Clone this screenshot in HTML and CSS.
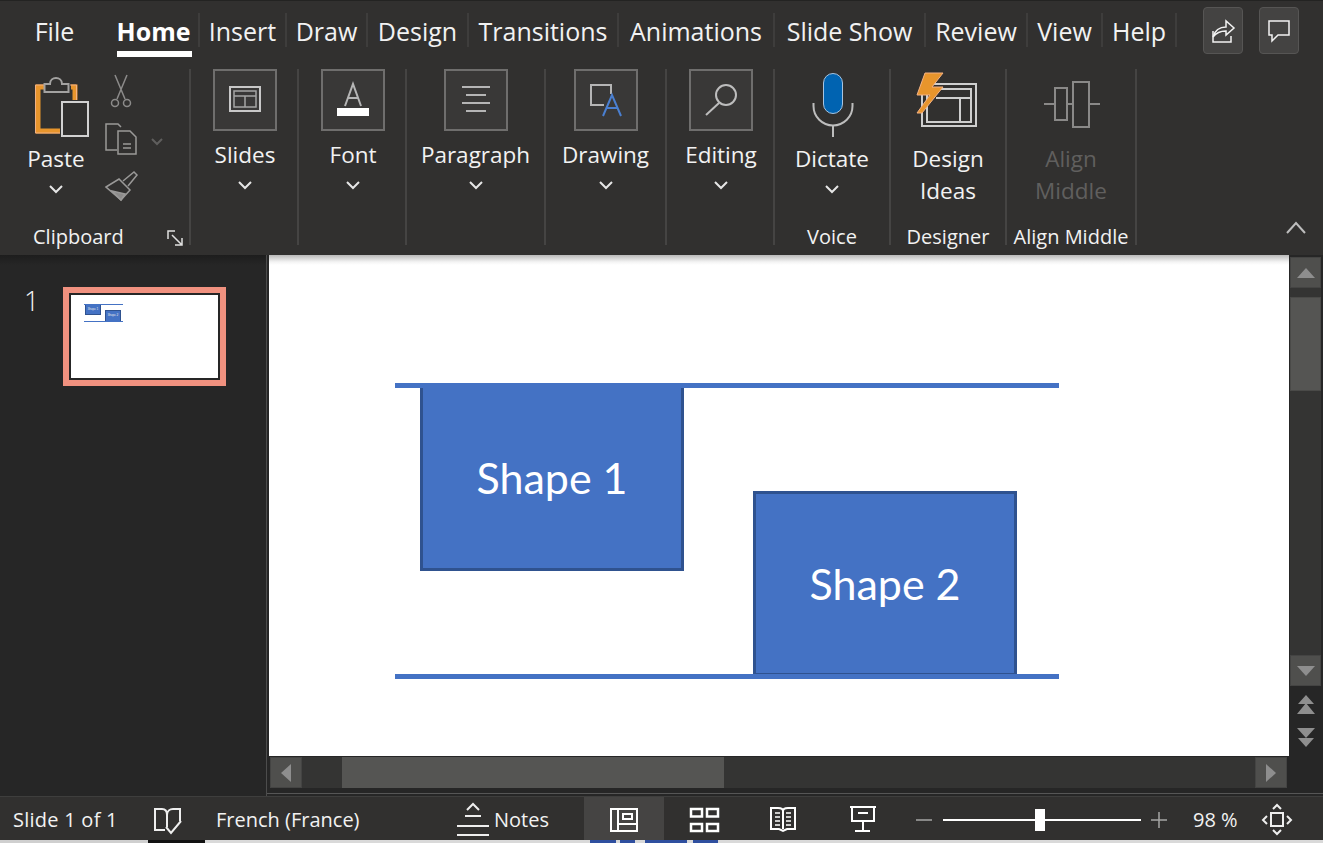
FILE: index.html
```html
<!DOCTYPE html>
<html lang="en">
<head>
    <meta charset="UTF-8">
    <meta name="viewport" content="width=device-width, initial-scale=1.0">
    <title>PowerPoint - Home</title>
    <link rel="stylesheet" href="styles.css">
</head>
<body>
<div class="app">
    <header class="ribbon">
        <div class="tabs-row">
            <nav class="tabs">
                <div class="tab tab-plain">File</div>
                <div class="tab tab-active">Home</div>
                <div class="tab">Insert</div>
                <div class="tab">Draw</div>
                <div class="tab">Design</div>
                <div class="tab">Transitions</div>
                <div class="tab">Animations</div>
                <div class="tab">Slide Show</div>
                <div class="tab">Review</div>
                <div class="tab">View</div>
                <div class="tab">Help</div>
            </nav>
            <div class="top-actions">
                <button class="top-btn">
                    <svg width="38" height="45" viewBox="1204 8 38 45" fill="none" stroke="#f2f2f2" stroke-width="1.500">
                        <path d="M1213 31V42H1231V36"/>
                        <path d="M1213 37C1215 30 1220 27 1226 27V21L1234 28L1226 35V31C1220 31 1216 33 1213 37Z"/>
                    </svg>
                </button>
                <button class="top-btn">
                    <svg width="38" height="45" viewBox="1260 8 38 45" fill="none" stroke="#f2f2f2" stroke-width="1.500">
                        <path d="M1269 21H1289V35H1278L1272 41V35H1269Z"/>
                    </svg>
                </button>
            </div>
        </div>
        <div class="groups-row">
            <div class="groups">
                <section class="group">
                    <div class="group-body clip-body">
                        <div class="big-btn paste-btn">
                            <svg width="92" height="74" viewBox="10 69 92 74" fill="none">
                                <path d="M44 87H38V131H60" stroke="#e8952c" stroke-width="5"/>
                                <path d="M71 87H75V100" stroke="#e8952c" stroke-width="5"/>
                                <path d="M44 85H35.500V133H60M70 85H76.500V100" stroke="#f4b183" stroke-width="1"/>
                                <path d="M44.500 92V84H50C50 76 62 76 62 84H68.500V92Z" stroke="#a3a2a1" stroke-width="2" fill="#31302f"/>
                                <rect x="62" y="102" width="26" height="34" stroke="#d2d2d2" stroke-width="2" fill="#31302f"/>
                            </svg>
                            <div class="btn-label">Paste</div>
                            <svg class="chevron" width="14" height="10" viewBox="0 0 14 10"><polyline points="1 2 7 8 13 2"/></svg>
                        </div>
                        <div class="clip-tools">
                            <svg width="64" height="42" viewBox="102 70 64 42" fill="none" stroke="#8c8b8a" stroke-width="1.500">
                                <path d="M115 75L125 99M127 75L117 99"/>
                                <circle cx="115" cy="103" r="3.500"/>
                                <circle cx="127" cy="103" r="3.500"/>
                            </svg>
                            <svg width="64" height="46" viewBox="102 112 64 46" fill="none" stroke="#9a9998" stroke-width="1.500">
                                <path d="M117 150H106V124H118L121 127"/>
                                <path d="M118 154V131H130L136 137V154Z"/>
                                <path d="M123 144H131M123 148H131"/>
                                <polyline points="152 139 157 144 162 139" stroke="#5f5e5d" stroke-width="2"/>
                            </svg>
                            <svg width="64" height="48" viewBox="102 158 64 48" fill="none" stroke="#9a9998" stroke-width="1.500">
                                <path d="M106 187L119 179L130 190L121 200Z"/>
                                <path d="M112 191L125 194L121 200Z" fill="#8c8b8a"/>
                                <path d="M123 181L134 172L137 175L128 186"/>
                            </svg>
                        </div>
                    </div>
                    <div class="group-label clip-label">
                        <span>Clipboard</span>
                        <svg width="18" height="18" viewBox="166 228 18 18" fill="none" stroke="#e0e0e0" stroke-width="1.500">
                            <path d="M175 230H168V238M172 234L182 244M182 237V244H175"/>
                        </svg>
                    </div>
                </section>

                <section class="group">
                    <div class="group-body nudge">
                        <div class="collapsed-box">
                            <svg width="60" height="58" viewBox="215 71 60 58" fill="none" stroke="#c8c8c8" stroke-width="2">
                                <rect x="230" y="87" width="30" height="24"/>
                                <path d="M234 91H256V107H234ZM234 96H256M245 96V107" stroke="#a5a5a5" stroke-width="1.500"/>
                            </svg>
                        </div>
                        <div class="btn-label box-label">Slides</div>
                        <svg class="chevron box-chevron" width="14" height="10" viewBox="0 0 14 10"><polyline points="1 2 7 8 13 2"/></svg>
                    </div>
                </section>

                <section class="group">
                    <div class="group-body nudge">
                        <div class="collapsed-box">
                            <svg width="60" height="58" viewBox="323 71 60 58" fill="none" stroke="#b5b5b5" stroke-width="2">
                                <path d="M345 106L353 84L361 106M348 98H358"/>
                                <rect x="337" y="108" width="32" height="8" fill="#fff" stroke="none"/>
                            </svg>
                        </div>
                        <div class="btn-label box-label">Font</div>
                        <svg class="chevron box-chevron" width="14" height="10" viewBox="0 0 14 10"><polyline points="1 2 7 8 13 2"/></svg>
                    </div>
                </section>

                <section class="group">
                    <div class="group-body">
                        <div class="collapsed-box">
                            <svg width="60" height="58" viewBox="446 71 60 58" fill="none" stroke="#b5b5b5" stroke-width="2">
                                <path d="M462 87H490M466 95H486M462 103H490M466 111H486"/>
                            </svg>
                        </div>
                        <div class="btn-label box-label">Paragraph</div>
                        <svg class="chevron box-chevron" width="14" height="10" viewBox="0 0 14 10"><polyline points="1 2 7 8 13 2"/></svg>
                    </div>
                </section>

                <section class="group">
                    <div class="group-body">
                        <div class="collapsed-box">
                            <svg width="60" height="58" viewBox="576 71 60 58" fill="none" stroke-width="2">
                                <path d="M611 94V85H591V105H604" stroke="#b5b5b5"/>
                                <path d="M603 116L612 95L621 116M606 108H618" stroke="#4a7fd0"/>
                            </svg>
                        </div>
                        <div class="btn-label box-label">Drawing</div>
                        <svg class="chevron box-chevron" width="14" height="10" viewBox="0 0 14 10"><polyline points="1 2 7 8 13 2"/></svg>
                    </div>
                </section>

                <section class="group">
                    <div class="group-body nudge">
                        <div class="collapsed-box">
                            <svg width="60" height="58" viewBox="691 71 60 58" fill="none" stroke="#bdbdbd" stroke-width="2">
                                <circle cx="726" cy="95" r="10"/>
                                <path d="M719 103L706 115"/>
                            </svg>
                        </div>
                        <div class="btn-label box-label">Editing</div>
                        <svg class="chevron box-chevron" width="14" height="10" viewBox="0 0 14 10"><polyline points="1 2 7 8 13 2"/></svg>
                    </div>
                </section>

                <section class="group">
                    <div class="group-body">
                        <div class="big-btn">
                            <svg width="114" height="74" viewBox="775 69 114 74" fill="none">
                                <rect x="823.500" y="73.500" width="19" height="40" rx="9.500" fill="#0063b1" stroke="#a8c4e0"/>
                                <path d="M813.500 103V106A19.500 19.500 0 0 0 852.500 106V103M833 125V137" stroke="#bdbdbd" stroke-width="2"/>
                            </svg>
                            <div class="btn-label">Dictate</div>
                            <svg class="chevron" width="14" height="10" viewBox="0 0 14 10"><polyline points="1 2 7 8 13 2"/></svg>
                        </div>
                    </div>
                    <div class="group-label">Voice</div>
                </section>

                <section class="group">
                    <div class="group-body">
                        <div class="big-btn">
                            <svg width="114" height="74" viewBox="891 69 114 74" fill="none">
                                <rect x="922" y="84" width="54" height="42" stroke="#cfcfcf" stroke-width="2"/>
                                <path d="M927 89H971V122H927ZM936 98H971M960 98V122" stroke="#cfcfcf" stroke-width="2"/>
                                <path d="M925 73H943L932 87H943L922 113H917L930 95H917Z" fill="#e8952c" stroke="#f4b183"/>
                            </svg>
                            <div class="btn-label">Design<br>Ideas</div>
                        </div>
                    </div>
                    <div class="group-label">Designer</div>
                </section>

                <section class="group">
                    <div class="group-body">
                        <div class="big-btn is-disabled">
                            <svg width="128" height="74" viewBox="1007 69 128 74" fill="none" stroke="#8a8988" stroke-width="2">
                                <path d="M1044 104H1100"/>
                                <rect x="1055" y="88" width="12" height="32" fill="#31302f"/>
                                <rect x="1073" y="82" width="16" height="45" fill="#31302f"/>
                            </svg>
                            <div class="btn-label">Align<br>Middle</div>
                        </div>
                    </div>
                    <div class="group-label">Align Middle</div>
                </section>
            </div>
            <svg class="collapse" width="30" height="16" viewBox="1282 232 30 16" fill="none" stroke="#bdbdbd" stroke-width="2">
                <polyline points="1287 246 1296 236 1305 246"/>
            </svg>
        </div>
    </header>

    <main class="main">
        <aside class="slide-panel">
            <div class="slide-num">1</div>
            <div class="thumb">
                <div class="thumb-inner">
                    <div class="mini-rect mini-1">Shape 1</div>
                    <div class="mini-rect mini-2">Shape 2</div>
                    <div class="mini-line mini-top"></div>
                    <div class="mini-line mini-bottom"></div>
                </div>
            </div>
        </aside>
        <div class="workspace">
            <div class="work-top">
                <div class="canvas">
                    <div class="shape shape-1">Shape 1</div>
                    <div class="shape shape-2">Shape 2</div>
                    <div class="guide guide-top"></div>
                    <div class="guide guide-bottom"></div>
                </div>
                <div class="vscroll">
                    <div class="sb-track">
                        <div class="sb-btn">
                            <svg width="18" height="10" viewBox="0 0 18 10"><path d="M0 10L9 0L18 10Z" fill="#8e8e8e"/></svg>
                        </div>
                        <div class="sb-gap"></div>
                        <div class="sb-thumb-v"></div>
                        <div class="sb-rest"></div>
                        <div class="sb-btn sb-btn-down">
                            <svg width="18" height="10" viewBox="0 0 18 10"><path d="M0 0L9 10L18 0Z" fill="#8e8e8e"/></svg>
                        </div>
                    </div>
                    <div class="sb-page">
                        <svg width="18" height="20" viewBox="0 0 18 20"><path d="M9 0L17 9H1ZM9 8L18 19H0Z" fill="#8e8e8e"/></svg>
                        <svg width="18" height="20" viewBox="0 0 18 20"><path d="M0 0H18L9 10ZM1 10H17L9 19Z" fill="#8e8e8e"/></svg>
                    </div>
                </div>
            </div>
            <div class="hscroll">
                <div class="sb-btn-h">
                    <svg width="10" height="18" viewBox="0 0 10 18"><path d="M10 0L0 9L10 18Z" fill="#8e8e8e"/></svg>
                </div>
                <div class="sb-gap-h"></div>
                <div class="sb-thumb-h"></div>
                <div class="sb-rest"></div>
                <div class="sb-btn-h">
                    <svg width="10" height="18" viewBox="0 0 10 18"><path d="M0 0L10 9L0 18Z" fill="#8e8e8e"/></svg>
                </div>
            </div>
            <div class="work-foot"></div>
        </div>
    </main>

    <footer class="status">
        <div class="st-cell st-count">Slide 1 of 1</div>
        <div class="st-cell">
            <svg width="66" height="44" viewBox="150 796 66 44" fill="none" stroke="#eee" stroke-width="2">
                <path d="M165 829H155V808H162C165 808 167 810 167 814C167 810 170 808 173 808H180V820M167 814V826"/>
                <path d="M166 826L171 832L181 820"/>
            </svg>
        </div>
        <div class="st-cell">French (France)</div>
        <div class="st-cell st-notes">
            <svg width="44" height="44" viewBox="450 796 44 44" fill="none" stroke="#eee" stroke-width="2">
                <path d="M467 809L473 803L479 809"/>
                <path d="M465 815H481M457 825H489M457 834H489"/>
            </svg>
            <span>Notes</span>
        </div>
        <div class="st-cell st-view is-active">
            <svg width="80" height="44" viewBox="584 796 80 44" fill="none" stroke="#fff" stroke-width="2">
                <path d="M611 808H637V830H611ZM618 808V830M618 823H637"/>
                <rect x="623" y="813" width="9" height="5"/>
            </svg>
        </div>
        <div class="st-cell st-view">
            <svg width="80" height="44" viewBox="664 796 80 44" fill="none" stroke="#fff" stroke-width="2.500">
                <rect x="691" y="808" width="11" height="7.500"/>
                <rect x="707" y="808" width="11" height="7.500"/>
                <rect x="691" y="823" width="11" height="7"/>
                <rect x="707" y="823" width="11" height="7"/>
            </svg>
        </div>
        <div class="st-cell st-view">
            <svg width="80" height="44" viewBox="744 796 80 44" fill="none" stroke="#fff" stroke-width="2">
                <path d="M771 807H778C781 807 783 808 783 810C783 808 785 807 788 807H795V828H787L783 830L779 828H771ZM783 810V828"/>
                <path d="M775 812H780M775 816H780M775 820H780M775 824H780M786 812H791M786 816H791M786 820H791M786 824H791" stroke-width="1.500"/>
            </svg>
        </div>
        <div class="st-cell st-view">
            <svg width="80" height="44" viewBox="824 796 80 44" fill="none" stroke="#fff" stroke-width="2">
                <path d="M850 806H876M852 806V820H874V806M858 812H868M863 820V830M855 830H870"/>
            </svg>
        </div>
        <div class="st-cell st-zoom">
            <svg width="276" height="44" viewBox="904 796 276 44" fill="none" stroke="#a5a5a5" stroke-width="1.500">
                <path d="M916 819H932M1151 819H1167M1159 811V827"/>
                <path d="M943 819H1141" stroke="#fff" stroke-width="2"/>
                <rect x="1035" y="808" width="10" height="22" fill="#fff" stroke="none"/>
            </svg>
        </div>
        <div class="st-cell st-pct">98 %</div>
        <div class="st-cell">
            <svg width="55" height="44" viewBox="1250 796 55 44" fill="none" stroke="#eee" stroke-width="2">
                <rect x="1271" y="812" width="12" height="13"/>
                <path d="M1273 808L1277 804L1281 808M1273 829L1277 833L1281 829M1267 815L1263 819L1267 823M1287 815L1291 819L1287 823"/>
            </svg>
        </div>
    </footer>
    <div class="edge-strip"></div>
</div>
</body>
</html>
```

FILE: styles.css
```css
* {
    box-sizing: border-box;
}

body {
    margin: 0;
    background-color: #262626;
    color: #f2f2f2;
    font-family: "Open Sans", "Noto Sans", sans-serif;
    overflow: hidden;
}

svg {
    display: block;
}

.app {
    width: 1323px;
    height: 843px;
    display: flex;
    flex-direction: column;
}

/* ribbon */
.ribbon {
    height: 255px;
    background-color: #31302f;
    border-top: 1px solid #232322;
    flex: none;
}

.tabs-row {
    display: flex;
    height: 61px;
}

.tabs {
    display: grid;
    grid-template-columns: 109px 91px 87px 81px 101px 150px 156px 151px 102px 75px 74px;
    padding-top: 12px;
    align-items: start;
}

.tab {
    position: relative;
    height: 34px;
    line-height: 36px;
    font-size: 25px;
    text-align: center;
    border-right: 2px solid #3e3d3c;
    white-space: nowrap;
}

.tab-plain {
    border-right: none;
}

.tab-active {
    font-weight: 700;
    color: #fff;
}

.tab-active::after {
    content: "";
    position: absolute;
    left: 8px;
    right: 6px;
    top: 38px;
    height: 6px;
    background-color: #fff;
}

.top-actions {
    display: flex;
    gap: 16px;
    margin-left: 26px;
    padding-top: 6px;
}

.top-btn {
    width: 40px;
    height: 47px;
    padding: 0;
    background-color: #444342;
    border: 1px solid #565554;
    border-radius: 4px;
}

.groups-row {
    display: flex;
    padding-top: 7px;
}

.groups {
    display: grid;
    grid-template-columns: 191px 108px 108px 139px 121px 108px 116px 116px 130px;
    height: 176px;
}

.group {
    display: flex;
    flex-direction: column;
    align-items: center;
    border-right: 2px solid #454443;
}

.group-body {
    flex: 1;
    width: 100%;
    display: flex;
    flex-direction: column;
    align-items: center;
}

.nudge {
    padding-left: 2px;
}

.group-label {
    height: 16px;
    line-height: 16px;
    font-size: 20px;
    white-space: nowrap;
}

.clip-body {
    flex-direction: row;
    align-items: flex-start;
}

.clip-label {
    display: flex;
    width: 100%;
    justify-content: space-between;
    padding: 0 5px 0 33px;
}

.paste-btn {
    margin-left: 10px;
}

.clip-tools {
    display: flex;
    flex-direction: column;
    padding-top: 1px;
}

.big-btn {
    display: flex;
    flex-direction: column;
    align-items: center;
}

.btn-label {
    font-size: 22.500px;
    line-height: 32px;
    text-align: center;
    white-space: nowrap;
}

.box-label {
    margin-top: 8px;
}

.chevron {
    margin-top: 9px;
    fill: none;
    stroke: #e6e6e6;
    stroke-width: 2;
}

.box-chevron {
    margin-top: 9px;
}

.collapsed-box {
    width: 64px;
    height: 62px;
    flex: none;
    background-color: #393837;
    border: 2px solid #6f6e6d;
}

.is-disabled .btn-label {
    color: #605f5e;
}

.collapse {
    margin: 150px 0 0 145px;
}

/* main area */
.main {
    flex: 1;
    display: flex;
    min-height: 0;
}

.slide-panel {
    width: 267px;
    flex: none;
    display: flex;
    align-items: flex-start;
    gap: 29px;
    padding: 32px 0 0 24px;
    background: linear-gradient(#1d1d1d, #262626 10px);
    border-right: 1px solid #4c4c4c;
}

.slide-num {
    width: 10px;
    font-size: 27px;
    font-weight: 300;
    line-height: 27px;
}

.thumb {
    width: 163px;
    height: 99px;
    flex: none;
    border: 6px solid #f0917f;
}

.thumb-inner {
    position: relative;
    height: 100%;
    background-color: #fff;
    border: 2px solid #262626;
}

.mini-rect {
    position: absolute;
    width: 16px;
    background-color: #4472c4;
    border: 1px solid #2f528f;
    color: #e8e8e8;
    font-size: 3px;
    line-height: 9px;
    text-align: center;
    font-family: Lato, sans-serif;
    white-space: nowrap;
}

.mini-1 {
    left: 14px;
    top: 9px;
    height: 11px;
}

.mini-2 {
    left: 34px;
    top: 15px;
    height: 12px;
}

.mini-line {
    position: absolute;
    left: 13px;
    width: 39px;
    height: 1px;
    background-color: #4472c4;
}

.mini-top {
    top: 9px;
}

.mini-bottom {
    top: 26px;
}

.workspace {
    flex: 1;
    display: flex;
    flex-direction: column;
    background-color: #262626;
}

.work-top {
    height: 501px;
    flex: none;
    display: flex;
}

.canvas {
    position: relative;
    width: 1020px;
    margin-left: 2px;
    overflow: hidden;
    background: linear-gradient(#b9b9b9, #f4f4f4 7px, #fff 10px);
}

.shape {
    position: absolute;
    display: flex;
    align-items: center;
    justify-content: center;
    width: 264px;
    background-color: #4472c4;
    border: 3px solid #2f528f;
    color: #fff;
    font-family: Lato, "Open Sans", sans-serif;
    font-size: 43px;
}

.shape-1 {
    left: 151px;
    top: 128px;
    height: 188px;
}

.shape-2 {
    left: 484px;
    top: 236px;
    height: 185px;
}

.guide {
    position: absolute;
    left: 126px;
    width: 664px;
    height: 5px;
    background-color: #4472c4;
}

.guide-top {
    top: 128px;
}

.guide-bottom {
    top: 419px;
}

.vscroll {
    flex: 1;
    display: flex;
    flex-direction: column;
    padding: 2px 2px 0 1px;
}

.sb-track {
    height: 429px;
    display: flex;
    flex-direction: column;
    background-color: #343433;
}

.sb-btn {
    height: 31px;
    display: flex;
    align-items: center;
    justify-content: center;
    background-color: #4f4f4d;
    border: 1px solid #444443;
}

.sb-gap {
    height: 9px;
}

.sb-thumb-v {
    height: 94px;
    background-color: #555553;
    border: 1px solid #4a4a48;
}

.sb-rest {
    flex: 1;
}

.sb-page {
    display: flex;
    flex-direction: column;
    align-items: center;
    gap: 13px;
    padding-top: 9px;
}

.hscroll {
    height: 31px;
    flex: none;
    margin: 1px 36px 0 3px;
    display: flex;
    background-color: #343433;
}

.sb-btn-h {
    width: 32px;
    display: flex;
    align-items: center;
    justify-content: center;
    background-color: #4f4f4d;
    border: 1px solid #444443;
}

.sb-gap-h {
    width: 40px;
}

.sb-thumb-h {
    width: 382px;
    background-color: #555553;
}

.work-foot {
    height: 3px;
    flex: none;
    margin-top: 5px;
    border-top: 1px solid #565656;
}

/* status bar */
.status {
    height: 44px;
    flex: none;
    display: grid;
    grid-template-columns: 150px 66px 234px 134px 80px 80px 80px 80px 276px 70px 73px;
    background-color: #31302f;
    border-top: 1px solid #3e3e3d;
    font-size: 20px;
    line-height: 45px;
    white-space: nowrap;
}

.st-count {
    padding-left: 13px;
    letter-spacing: 0.250px;
}

.st-notes {
    display: flex;
}

.st-view {
    display: flex;
    justify-content: center;
}

.is-active {
    background-color: #454443;
}

.st-pct {
    padding-left: 13px;
}

.edge-strip {
    height: 3px;
    flex: none;
    background: linear-gradient(90deg, #cfcfcf 148px, #111 148px, #111 205px, #d9d9d9 205px, #d9d9d9 590px, #2f4f9f 590px, #2f4f9f 616px, #d9d9d9 616px, #d9d9d9 620px, #2f4f9f 620px, #2f4f9f 635px, #d9d9d9 635px, #d9d9d9 645px, #2f4f9f 645px, #2f4f9f 687px, #d9d9d9 687px, #d9d9d9 693px, #2f4f9f 693px, #2f4f9f 718px, #d9d9d9 718px);
}
```
